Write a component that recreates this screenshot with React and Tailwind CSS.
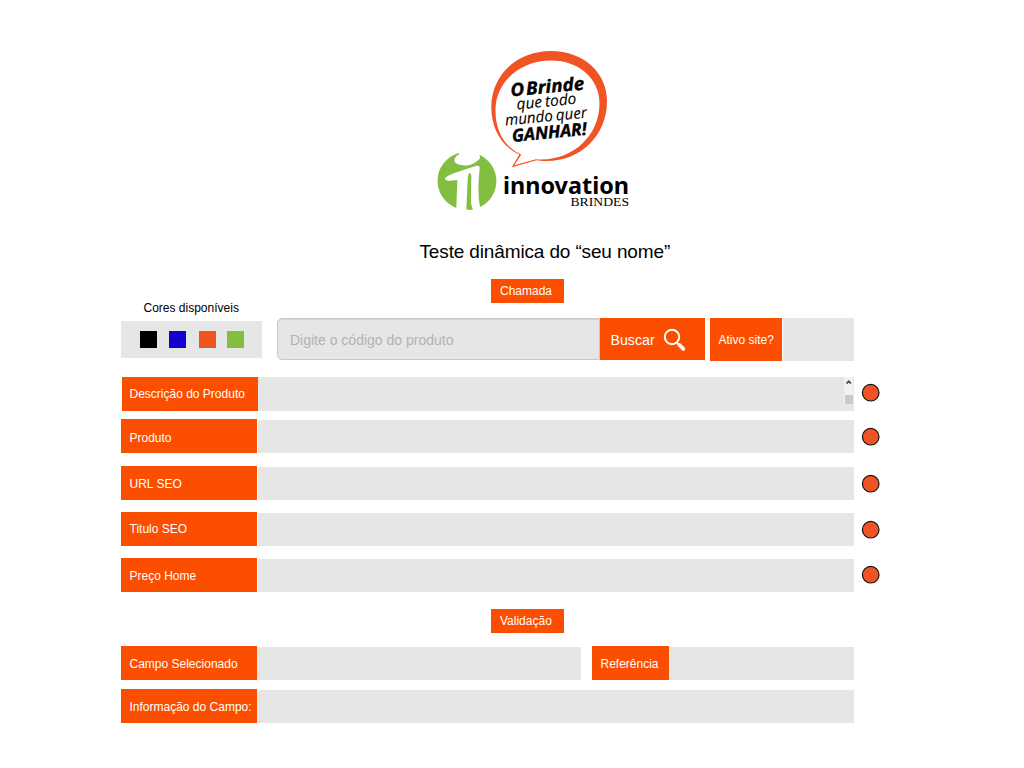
import React from "react";

const dataRows = [
  { label: "Descrição do Produto", row: "mt-4 pl-[122px]", text: "pl-[7.5px] pt-[9px]", field: "h-[34px]", gap: "", dot: "mt-[6px]", scroll: true },
  { label: "Produto", row: "mt-2 pl-[121px]", text: "pl-[8.5px] pt-[11px]", field: "mt-px h-[33px]", gap: "ml-px", dot: "mt-[8px]" },
  { label: "URL SEO", row: "mt-[13px] pl-[121px]", text: "pl-[8.5px] pt-[10px]", field: "mt-px h-[33px]", gap: "ml-px", dot: "mt-[8px]" },
  { label: "Titulo SEO", row: "mt-3 pl-[121px]", text: "pl-[8.5px] pt-[9px]", field: "mt-px h-[33px]", gap: "ml-px", dot: "mt-[8px]" },
  { label: "Preço Home", row: "mt-3 pl-[121px]", text: "pl-[8.5px] pt-[10px]", field: "mt-px h-[33px]", gap: "ml-px", dot: "mt-[7px]" },
];

function Logo() {
  return (
    <svg className="ml-[430px] block h-[175px] w-[210px] shrink-0" viewBox="430 40 210 175">
      <path
        fill="#f15424"
        fillRule="evenodd"
        d="M519.3 154.5C501 146 491.3 128 491.3 107C491.3 76 516 51 551 51C584 51 607 73 607 101C607 136 580 161.5 546 161C542 161 539 160.500 536.500 160.200L511.800 167.300ZM519 153.500L521.300 154.500L514.300 165.300L536 159.200C571 162 599.500 137 599.500 103C599.500 79 579 60.500 551 60.500C519 60.500 496 83 495.500 109C495 129 503 145 519 153.500Z"
      />
      <g fontFamily="'Open Sans', 'Noto Sans', sans-serif" fontStyle="italic" fill="#000" stroke="#000">
        <text transform="translate(511 96.500) rotate(-5.500)" fontSize="18" fontWeight="700" strokeWidth=".35" wordSpacing="-3" textLength="74" lengthAdjust="spacingAndGlyphs">O Brinde</text>
        <text transform="translate(517 109.500) rotate(-5.500)" fontSize="15.500" strokeWidth=".1" wordSpacing="-1" textLength="60" lengthAdjust="spacingAndGlyphs">que todo</text>
        <text transform="translate(505.500 125.500) rotate(-5.500)" fontSize="15.500" strokeWidth=".1" wordSpacing="-1" textLength="82" lengthAdjust="spacingAndGlyphs">mundo quer</text>
        <text transform="translate(512.500 142) rotate(-5.500)" fontSize="17.500" fontWeight="700" strokeWidth=".35" textLength="75" lengthAdjust="spacingAndGlyphs">GANHAR!</text>
      </g>
      <g transform="translate(434 148) scale(.33333)" fill="#82bf41">
        <path d="M75 15A88 87 0 0 0 67 180L70 96L48 98Q32 99 33 91Q38 84 61 75L125 54Q138 50 137 62Q129 130 138 177A88 87 0 0 0 136 20Q143 32 129 39Q112 55 87 52Q63 49 61 38Q62 24 75 20Z" />
        <path d="M107 75Q102 78 101 95L97 183Q106 188 117 184Q110 173 111 150L112 85Q112 76 107 75Z" />
      </g>
      <text x="503" y="194" fontFamily="'Noto Sans', sans-serif" fontSize="23.500" fontWeight="700" textLength="126" lengthAdjust="spacingAndGlyphs">innovation</text>
      <text x="570.500" y="206" fontFamily="'Liberation Serif', serif" fontSize="13" textLength="58.500" lengthAdjust="spacingAndGlyphs">BRINDES</text>
    </svg>
  );
}

function Label({ children, className }) {
  return <div className={`h-[34px] shrink-0 whitespace-nowrap bg-[#fb4e00] text-xs text-white ${className}`}>{children}</div>;
}

function Scrollbar() {
  return (
    <div className="mr-px flex h-[27px] w-[9px] flex-col justify-between bg-[#f1f1f1]">
      <svg className="h-[9px] w-[9px]" viewBox="0 0 9 9"><path d="M2.500 6.500L4.700 4.300L6.900 6.500" fill="none" stroke="#444" strokeWidth="1.700" /></svg>
      <div className="ml-px h-[9px] w-[8px] bg-[#cacaca]" />
    </div>
  );
}

export default function App() {
  return (
    <main className="flex h-[768px] w-[1024px] flex-col overflow-hidden bg-white pt-10 font-['Liberation_Sans',Arial,sans-serif] text-black">
      <Logo />
      <h1 className="ml-[419.5px] mt-[25px] h-[24px] whitespace-nowrap text-[19px] leading-6 tracking-[-0.14px]">Teste dinâmica do “seu nome”</h1>
      <div className="flex h-[97px] pt-[15px]">
        <section className="ml-[121px] w-[141px]">
          <h2 className="ml-[22.5px] mt-[21px] h-[21px] whitespace-nowrap text-xs leading-4">Cores disponíveis</h2>
          <div className="flex h-[37px] bg-[#e6e6e6] pl-[19px] pt-[10px]">
            <span className="h-[17px] w-[17px] bg-black" />
            <span className="ml-[12px] h-[17px] w-[17px] bg-[#1400cf]" />
            <span className="ml-[13px] h-[17px] w-[17px] bg-[#f15424]" />
            <span className="ml-[11px] h-[17px] w-[17px] bg-[#82bf41]" />
          </div>
        </section>
        <section className="ml-[15px]">
          <div className="ml-[214px] h-[24px] w-[73px] bg-[#fb4e00] pl-[9px] pt-[4px] text-xs text-white">Chamada</div>
          <div className="mt-[15px] flex items-start">
            <div className="h-[42px] w-[323px] rounded-l-[5px] border border-[#c8c8c8] bg-[#e6e6e6] pl-[12px] pt-[11px] text-[14px] leading-5 text-[#b2b2b2] shadow-[inset_0_1px_1px_#d2d2d2]">Digite o código do produto</div>
            <button className="flex h-[42px] w-[105px] bg-[#fb4e00] pl-[10.5px] pt-[12px] text-[14.2px] leading-5 text-white">
              <span className="w-[44px]">Buscar</span>
              <svg className="-mt-[2px] ml-[8.5px] h-[25px] w-[24px]" viewBox="0 0 24 25" fill="none" stroke="white">
                <circle cx="9" cy="9" r="7.200" strokeWidth="2" />
                <path d="M14 15L16 17" strokeWidth="1.800" />
                <path d="M16.500 17L20.300 20.800" strokeWidth="3.800" strokeLinecap="round" />
              </svg>
            </button>
            <div className="ml-[5px] h-[43px] w-[72px] whitespace-nowrap bg-[#fb4e00] pl-[8.5px] pt-[14px] text-xs text-white">Ativo site?</div>
            <div className="ml-px h-[43px] w-[71px] bg-[#e6e6e6]" />
          </div>
        </section>
      </div>
      {dataRows.map((row) => (
        <div key={row.label} className={`flex h-[34px] shrink-0 items-start ${row.row}`}>
          <Label className={`w-[136px] ${row.text}`}>{row.label}</Label>
          <div className={`flex w-[596px] justify-end bg-[#e6e6e6] ${row.field} ${row.gap}`}>{row.scroll && <Scrollbar />}</div>
          <svg className={`ml-[7px] h-[20px] w-[20px] ${row.dot}`} viewBox="0 0 20 20"><circle cx="9.700" cy="9.700" r="8.300" fill="#f15424" stroke="#111" strokeWidth="1.200" /></svg>
        </div>
      ))}
      <div className="ml-[491px] mt-[17px] h-[24px] w-[73px] shrink-0 bg-[#fb4e00] pl-[9px] pt-[4px] text-xs text-white">Validação</div>
      <div className="mt-[13px] flex pl-[121px]">
        <Label className="w-[136px] pl-[8.5px] pt-[10px]">Campo Selecionado</Label>
        <div className="mt-px h-[33px] w-[324px] bg-[#e6e6e6]" />
        <Label className="ml-[11px] w-[77px] pl-[8.5px] pt-[10px]">Referência</Label>
        <div className="mt-px h-[33px] w-[185px] bg-[#e6e6e6]" />
      </div>
      <div className="mt-[9px] flex pl-[121px]">
        <Label className="w-[136px] pl-[8.5px] pt-[10px]">Informação do Campo:</Label>
        <div className="mt-px h-[33px] w-[597px] bg-[#e6e6e6]" />
      </div>
    </main>
  );
}
